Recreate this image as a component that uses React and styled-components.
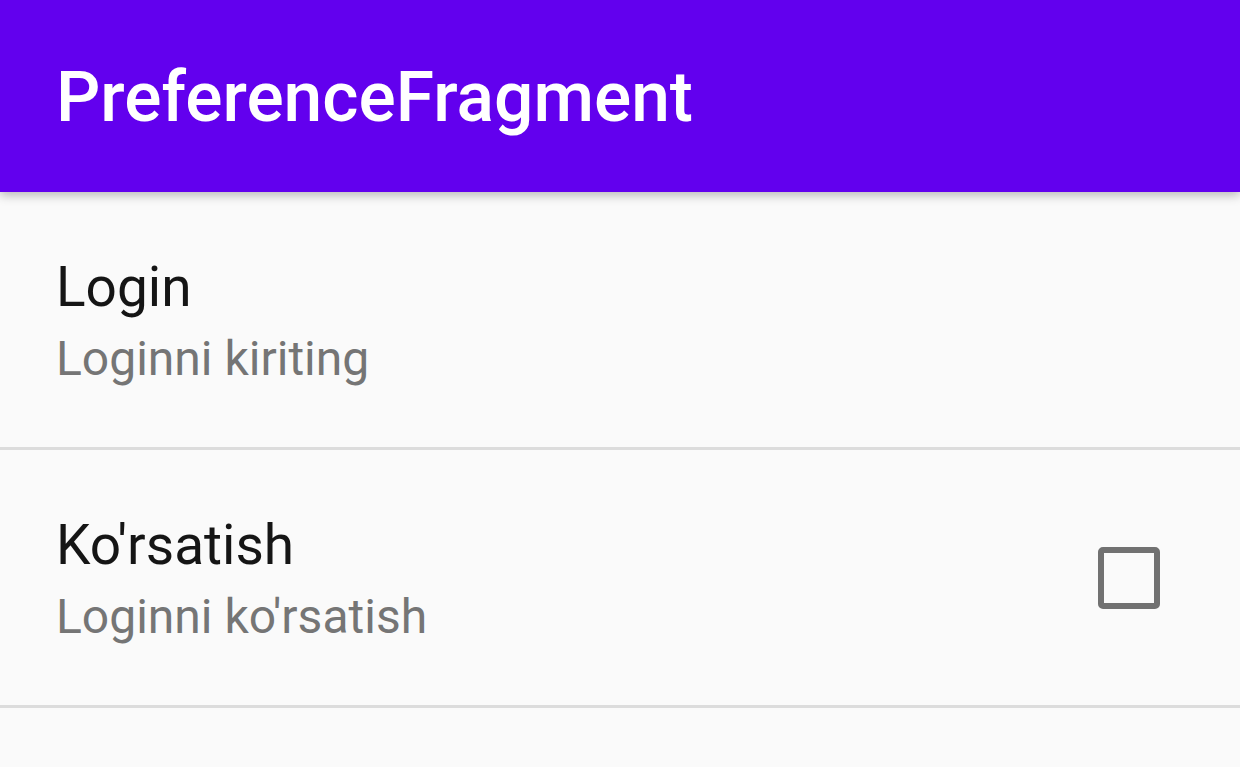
import styled, { createGlobalStyle } from 'styled-components';

const GlobalStyle = createGlobalStyle`
  html, body {
    margin: 0;
    padding: 0;
    background: #fafafa;
    font-family: Roboto, 'Noto Sans', sans-serif;
  }
`;

const prefs = [
  { key: 'login', title: 'Login', summary: 'Loginni kiriting' },
  { key: 'show', title: "Ko'rsatish", summary: "Loginni ko'rsatish", checkbox: true },
];

const App = () => {
  return (
    <SScreen>
      <GlobalStyle />
      <SToolbar>
        <h1>PreferenceFragment</h1>
      </SToolbar>
      <SList>
        {prefs.map((p) => (
          <SRow key={p.key}>
            <SText>
              <STitle>{p.title}</STitle>
              <SSummary>{p.summary}</SSummary>
            </SText>
            {p.checkbox && <SCheckbox />}
          </SRow>
        ))}
      </SList>
    </SScreen>
  );
};

export default App;

const SScreen = styled.div`
  width: 1240px;
  height: 767px;
  overflow: hidden;
  background: #fafafa;
  display: flex;
  flex-direction: column;
`;

const SToolbar = styled.header`
  height: 192px;
  flex-shrink: 0;
  background-color: #6200ee;
  display: flex;
  align-items: center;
  padding-left: 56px;
  box-shadow: 0 3px 10px rgba(0, 0, 0, 0.28);
  position: relative;
  z-index: 1;

  > h1 {
    margin: 0;
    margin-top: 2px;
    color: #ffffff;
    font-family: Roboto, sans-serif;
    font-weight: 500;
    font-size: 69.5px;
    letter-spacing: 0;
  }
`;

const SList = styled.div`
  display: flex;
  flex-direction: column;
`;

const SRow = styled.div`
  height: 255px;
  display: flex;
  align-items: center;
  justify-content: space-between;
  padding: 0 80px 0 56px;
  border-bottom: 3px solid #dcdcdc;
`;

const SText = styled.div`
  display: flex;
  flex-direction: column;
  row-gap: 12px;
  margin-top: 3px;
`;

const STitle = styled.span`
  font-size: 55px;
  line-height: 64px;
  color: #151515;
`;

const SSummary = styled.span`
  font-size: 48px;
  line-height: 56px;
  color: #757575;
`;

const SCheckbox = styled.div`
  width: 50px;
  height: 50px;
  border: 6px solid #717171;
  border-radius: 5px;
`;
